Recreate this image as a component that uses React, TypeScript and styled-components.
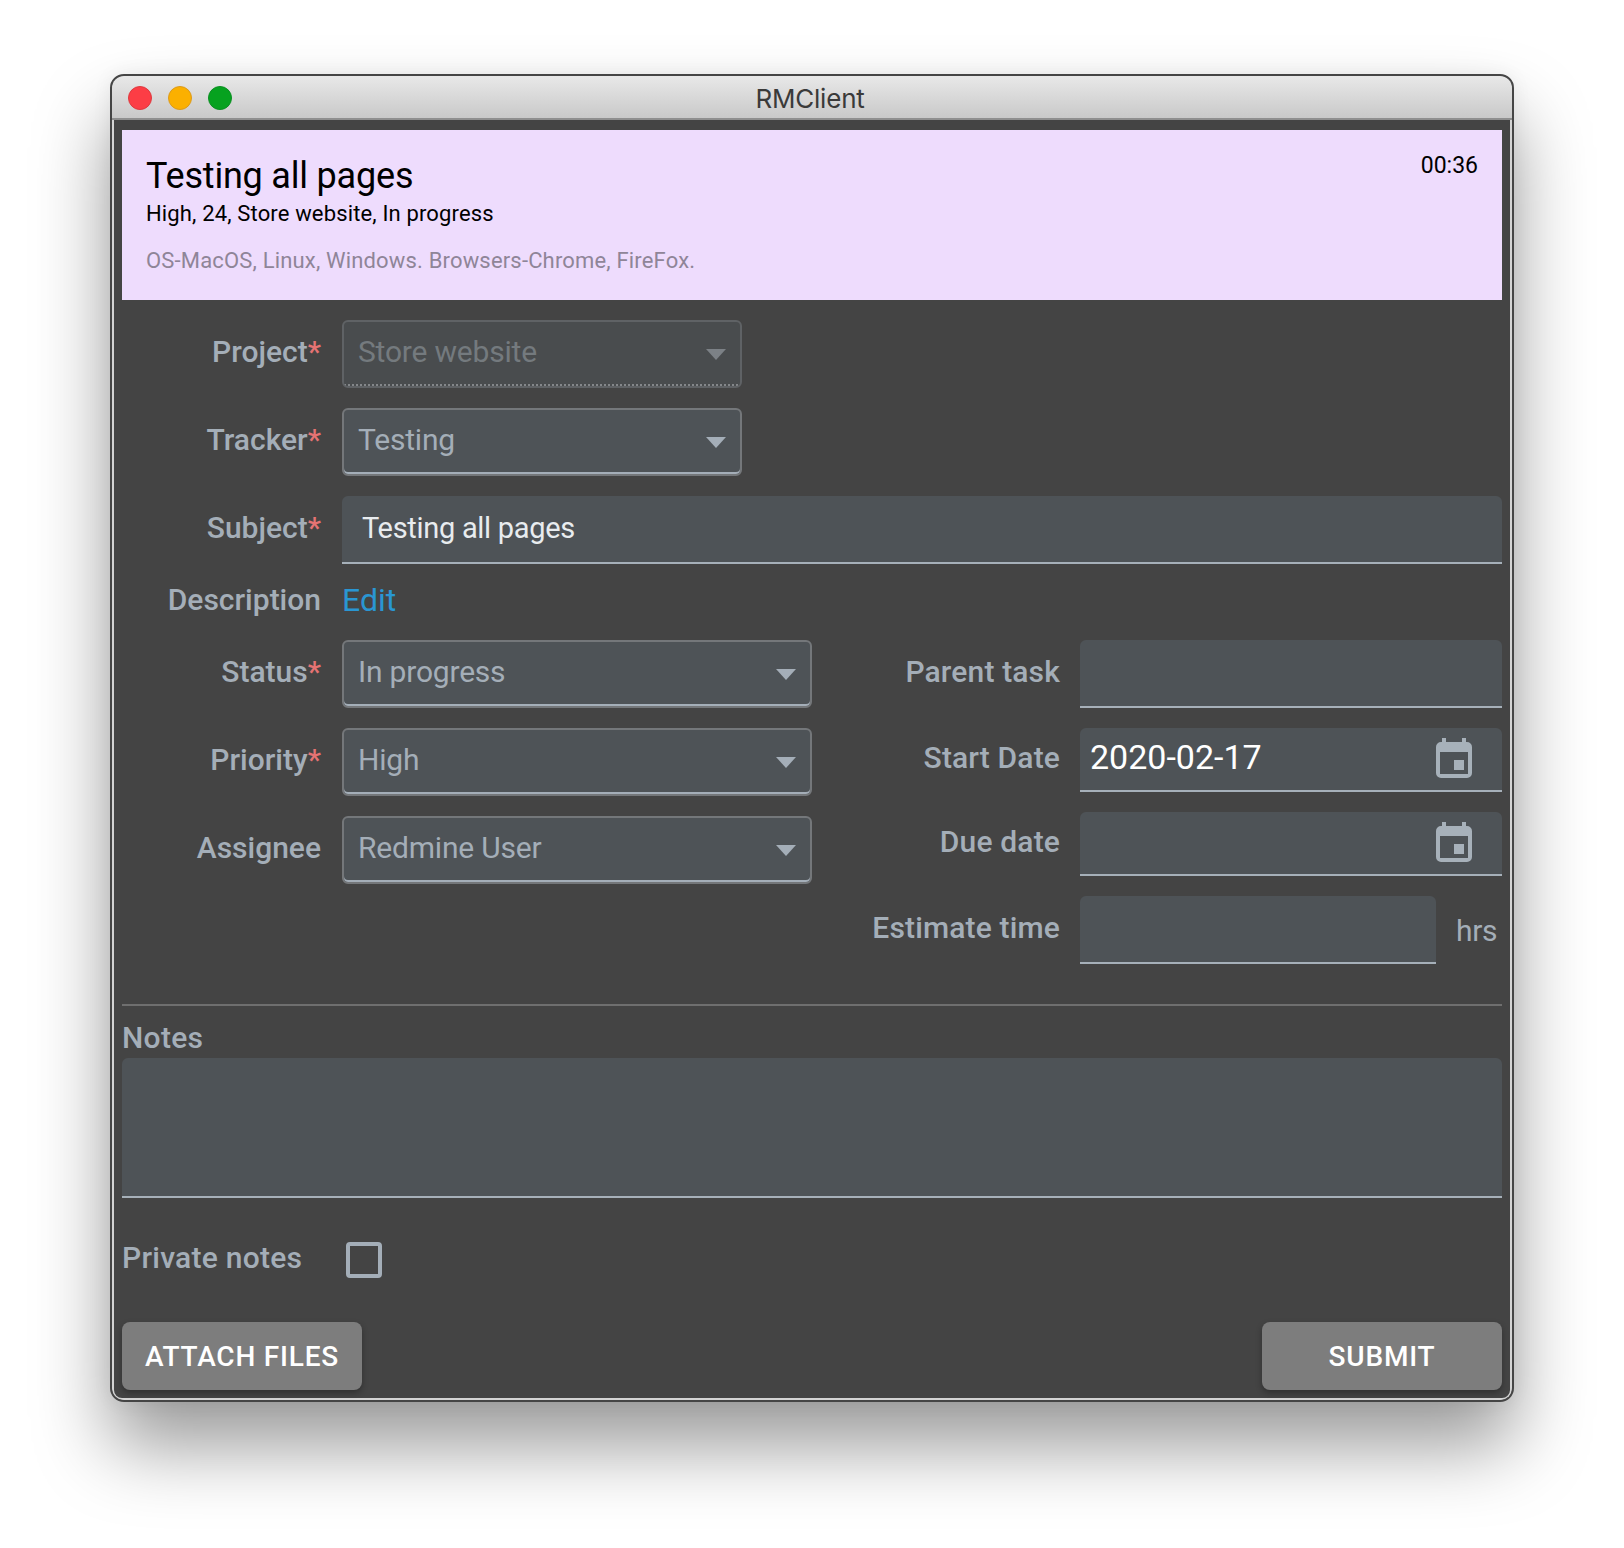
import { createGlobalStyle } from 'styled-components';
import styled from 'styled-components';

const GlobalStyle = createGlobalStyle`
  html, body {
    margin: 0;
    padding: 0;
    background: #ffffff;
  }
  * {
    box-sizing: border-box;
  }
`;

const FONT = `Roboto, "Noto Sans", sans-serif`;
const LABEL = '#a4aeb8';
const FIELD = '#4e5357';

const CalendarIcon = () => (
  <CalendarSvg viewBox="0 0 36 40">
    <path
      fillRule="evenodd"
      d="M6 0h4v4h16V0h4v4h1a5 5 0 0 1 5 5v26a5 5 0 0 1-5 5H5a5 5 0 0 1-5-5V9a5 5 0 0 1 5-5h1zM4 14v22h28V14zM18 22h10v10H18z"
    />
  </CalendarSvg>
);

const App = () => {
  return (
    <Page>
      <GlobalStyle />
      <Window>
        <TitleBar>
          <Lights>
            <Light $color="#fc3d45" $edge="#dd3a3f" />
            <Light $color="#fbb000" $edge="#db9a1c" />
            <Light $color="#06a21f" $edge="#0b8f22" />
          </Lights>
          <WindowTitle>RMClient</WindowTitle>
        </TitleBar>
        <Body>
          <Banner>
            <BannerText>
              <BannerTitle>Testing all pages</BannerTitle>
              <BannerMeta>High, 24, Store website, In progress</BannerMeta>
              <BannerDesc>OS-MacOS, Linux, Windows. Browsers-Chrome, FireFox.</BannerDesc>
            </BannerText>
            <Timer>00:36</Timer>
          </Banner>

          <Form>
            <Row>
              <Label>Project<Star>*</Star></Label>
              <Select $width={400} $disabled>
                <SelectText $disabled>Store website</SelectText>
                <Caret $disabled />
              </Select>
            </Row>
            <Row>
              <Label>Tracker<Star>*</Star></Label>
              <Select $width={400}>
                <SelectText>Testing</SelectText>
                <Caret />
              </Select>
            </Row>
            <Row>
              <Label>Subject<Star>*</Star></Label>
              <Field $grow>
                <FieldText>Testing all pages</FieldText>
              </Field>
            </Row>
            <DescriptionRow>
              <Label>Description</Label>
              <EditLink>Edit</EditLink>
            </DescriptionRow>

            <Columns>
              <LeftColumn>
                <Row>
                  <Label>Status<Star>*</Star></Label>
                  <Select $width={470}>
                    <SelectText>In progress</SelectText>
                    <Caret />
                  </Select>
                </Row>
                <Row>
                  <Label>Priority<Star>*</Star></Label>
                  <Select $width={470}>
                    <SelectText>High</SelectText>
                    <Caret />
                  </Select>
                </Row>
                <Row>
                  <Label>Assignee</Label>
                  <Select $width={470}>
                    <SelectText>Redmine User</SelectText>
                    <Caret />
                  </Select>
                </Row>
              </LeftColumn>
              <RightColumn>
                <RightRow>
                  <RightLabel>Parent task</RightLabel>
                  <Field $grow />
                </RightRow>
                <RightRow>
                  <RightLabel>Start Date</RightLabel>
                  <DateField>
                    <DateText>2020-02-17</DateText>
                    <CalendarIcon />
                  </DateField>
                </RightRow>
                <RightRow>
                  <RightLabel>Due date</RightLabel>
                  <DateField>
                    <DateText />
                    <CalendarIcon />
                  </DateField>
                </RightRow>
                <RightRow>
                  <RightLabel>Estimate time</RightLabel>
                  <Field $width={356} />
                  <Unit>hrs</Unit>
                </RightRow>
              </RightColumn>
            </Columns>
          </Form>

          <Divider />
          <NotesLabel>Notes</NotesLabel>
          <NotesBox />
          <PrivateRow>
            <PrivateLabel>Private notes</PrivateLabel>
            <CheckBox />
          </PrivateRow>
          <Actions>
            <ActionButton>ATTACH FILES</ActionButton>
            <ActionButton>SUBMIT</ActionButton>
          </Actions>
        </Body>
      </Window>
    </Page>
  );
};
export default App;

const Page = styled.div`
  width: 1624px;
  height: 1548px;
  padding: 74px 110px 0;
  overflow: hidden;
  background: #ffffff;
`;

const Window = styled.div`
  width: 1404px;
  height: 1328px;
  border: 2px solid #454545;
  border-radius: 14px;
  overflow: hidden;
  background: #444444;
  box-shadow: 0 44px 76px rgba(0, 0, 0, 0.4), 0 0 20px rgba(0, 0, 0, 0.06);
  display: flex;
  flex-direction: column;
`;

const TitleBar = styled.div`
  height: 44px;
  flex-shrink: 0;
  display: flex;
  align-items: center;
  justify-content: center;
  background: linear-gradient(#e8e8e8, #c9c9c9);
  border-bottom: 2px solid #8f8f8f;
  position: relative;
`;

const Lights = styled.div`
  position: absolute;
  left: 16px;
  top: 10px;
  display: flex;
  gap: 16px;
`;

const Light = styled.span<{ $color: string; $edge: string }>`
  width: 24px;
  height: 24px;
  border-radius: 50%;
  background: ${({ $color }) => $color};
  border: 1px solid ${({ $edge }) => $edge};
`;

const WindowTitle = styled.span`
  font-family: Inter, sans-serif;
  font-size: 26px;
  letter-spacing: -0.2px;
  margin: 3px 4px 0 0;
  color: #3a3a3a;
`;

const Body = styled.div`
  flex: 1;
  padding: 10px 8px 8px;
  border: solid #d4d4d4;
  border-width: 0 2px 2px;
  border-radius: 0 0 10px 10px;
  display: flex;
  flex-direction: column;
`;

const Banner = styled.div`
  height: 170px;
  flex-shrink: 0;
  background: #eedcfd;
  padding: 24px 24px 0;
  display: flex;
  justify-content: space-between;
  align-items: flex-start;
`;

const BannerText = styled.div`
  display: flex;
  flex-direction: column;
`;

const BannerTitle = styled.div`
  font-family: ${FONT};
  font-size: 36px;
  line-height: 42px;
  margin-top: 1px;
  letter-spacing: -0.2px;
  color: #000000;
`;

const BannerMeta = styled.div`
  font-family: ${FONT};
  font-size: 22px;
  line-height: 30px;
  margin-top: 2px;
  letter-spacing: 0.15px;
  color: #000000;
`;

const BannerDesc = styled.div`
  font-family: ${FONT};
  font-size: 22px;
  line-height: 30px;
  margin-top: 17px;
  letter-spacing: 0.17px;
  color: #8f8598;
`;

const Timer = styled.div`
  font-family: ${FONT};
  font-size: 23px;
  line-height: 30px;
  margin-top: -3px;
  color: #000000;
`;

const Form = styled.div`
  margin-top: 20px;
  display: flex;
  flex-direction: column;
  gap: 20px;
`;

const Row = styled.div`
  display: flex;
  align-items: center;
  gap: 20px;
  height: 68px;
`;

const Label = styled.label`
  width: 200px;
  flex-shrink: 0;
  padding-right: 1px;
  text-align: right;
  font-family: ${FONT};
  font-weight: 500;
  font-size: 30px;
  line-height: 36px;
  margin-top: -4px;
  color: ${LABEL};
`;

const Star = styled.span`
  color: #e57373;
`;

const Select = styled.div<{ $width: number; $disabled?: boolean }>`
  width: ${({ $width }) => $width}px;
  height: 68px;
  padding: 0 14px;
  display: flex;
  align-items: center;
  justify-content: space-between;
  border: 2px solid ${({ $disabled }) => ($disabled ? '#5f6265' : '#74777a')};
  border-radius: 6px;
  background-color: ${({ $disabled }) => ($disabled ? '#494c4e' : FIELD)};
  ${({ $disabled }) =>
    $disabled
      ? `background-image: linear-gradient(to right, #84878a 50%, transparent 50%);
         background-size: 4px 2px;
         background-repeat: repeat-x;
         background-position: left bottom;`
      : `box-shadow: inset 0 -2px 0 ${LABEL};`}
`;

const SelectText = styled.span<{ $disabled?: boolean }>`
  font-family: ${FONT};
  font-size: 30px;
  letter-spacing: -0.2px;
  margin-top: -6px;
  color: ${({ $disabled }) => ($disabled ? '#747a7e' : LABEL)};
`;

const Caret = styled.span<{ $disabled?: boolean }>`
  width: 0;
  height: 0;
  border-style: solid;
  border-width: 11px 10px 0;
  border-color: ${({ $disabled }) => ($disabled ? '#7c8186' : LABEL)} transparent transparent;
`;

const Field = styled.div<{ $grow?: boolean; $width?: number }>`
  ${({ $grow }) => ($grow ? 'flex: 1;' : '')}
  ${({ $width }) => ($width ? `width: ${$width}px;` : '')}
  height: 68px;
  padding: 0 20px;
  display: flex;
  align-items: center;
  background: ${FIELD};
  border-bottom: 2px solid #a6b0b9;
  border-radius: 6px 6px 0 0;
`;

const FieldText = styled.span`
  font-family: ${FONT};
  font-size: 29px;
  letter-spacing: -0.3px;
  margin-top: -3px;
  color: #e8ecef;
`;

const DescriptionRow = styled.div`
  display: flex;
  align-items: center;
  gap: 20px;
  height: 36px;
`;

const EditLink = styled.a`
  font-family: ${FONT};
  font-size: 32px;
  line-height: 36px;
  margin-top: -4px;
  color: #2a96d2;
`;

const Columns = styled.div`
  display: flex;
  justify-content: space-between;
`;

const LeftColumn = styled.div`
  display: flex;
  flex-direction: column;
  gap: 20px;
`;

const RightColumn = styled.div`
  width: 680px;
  display: flex;
  flex-direction: column;
  gap: 20px;
`;

const RightRow = styled.div`
  display: flex;
  align-items: center;
  gap: 20px;
`;

const RightLabel = styled(Label)`
  width: 238px;
  padding-right: 0;
  letter-spacing: 0.15px;
`;

const DateField = styled.div`
  flex: 1;
  height: 64px;
  padding: 0 30px 0 10px;
  display: flex;
  align-items: center;
  justify-content: space-between;
  background: ${FIELD};
  border-bottom: 2px solid #a6b0b9;
  border-radius: 6px 6px 0 0;
`;

const DateText = styled.span`
  font-family: ${FONT};
  font-size: 34px;
  margin-top: -5px;
  color: #ffffff;
`;

const CalendarSvg = styled.svg`
  width: 36px;
  height: 40px;
  flex-shrink: 0;
  margin-top: -2px;
  fill: #a7b1ba;
`;

const Unit = styled.span`
  font-family: ${FONT};
  font-size: 30px;
  letter-spacing: -0.3px;
  margin-top: 0;
  color: ${LABEL};
`;

const Divider = styled.div`
  height: 2px;
  flex-shrink: 0;
  margin-top: 40px;
  background: #6f6f6f;
`;

const NotesLabel = styled.div`
  font-family: ${FONT};
  font-weight: 500;
  font-size: 30px;
  line-height: 64px;
  height: 52px;
  letter-spacing: 0.3px;
  color: ${LABEL};
`;

const NotesBox = styled.div`
  height: 140px;
  flex-shrink: 0;
  background: ${FIELD};
  border-bottom: 2px solid #a6b0b9;
  border-radius: 6px 6px 0 0;
`;

const PrivateRow = styled.div`
  margin-top: 44px;
  height: 36px;
  flex-shrink: 0;
  display: flex;
  align-items: center;
`;

const PrivateLabel = styled.span`
  width: 224px;
  font-family: ${FONT};
  font-weight: 500;
  font-size: 30px;
  letter-spacing: 0.25px;
  margin-top: -6px;
  color: ${LABEL};
`;

const CheckBox = styled.span`
  width: 36px;
  height: 36px;
  border: 4px solid #a4aeb8;
  border-radius: 4px;
`;

const Actions = styled.div`
  margin-top: 44px;
  display: flex;
  justify-content: space-between;
`;

const ActionButton = styled.button`
  width: 240px;
  height: 68px;
  border: 0;
  border-radius: 8px;
  background: #7d7d7d;
  color: #ffffff;
  font-family: Roboto, sans-serif;
  font-weight: 500;
  font-size: 28px;
  letter-spacing: 0.8px;
  box-shadow: 0 3px 6px rgba(0, 0, 0, 0.3);
`;
